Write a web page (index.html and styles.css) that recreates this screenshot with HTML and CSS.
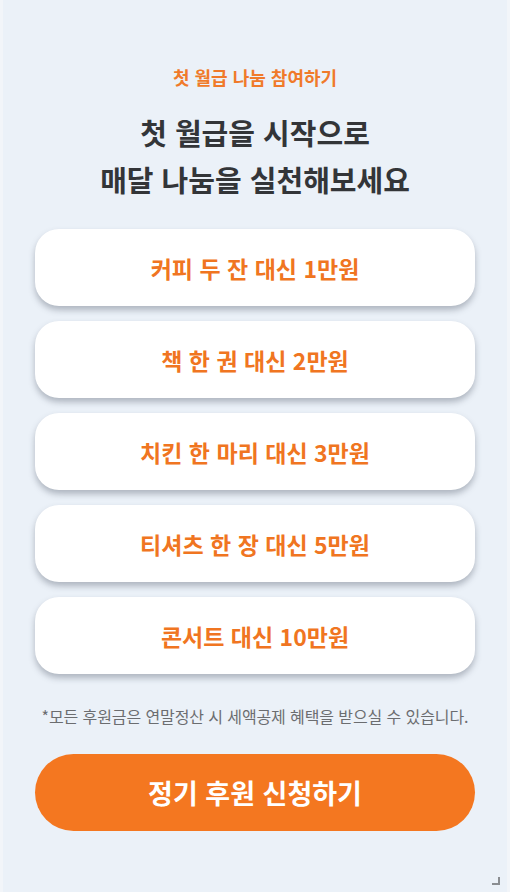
FILE: index.html
```html
<!DOCTYPE html>
<html lang="ko">

<head>
    <meta charset="utf-8">
    <title>첫 월급 나눔 참여하기</title>
    <link rel="stylesheet" href="styles.css">
</head>

<body>
    <main class="page">
        <p class="eyebrow">첫 월급 나눔 참여하기</p>
        <h1 class="headline">첫 월급을 시작으로<br>매달 나눔을 실천해보세요</h1>
        <section class="options">
            <button class="option">커피 두 잔 대신 1만원</button>
            <button class="option">책 한 권 대신 2만원</button>
            <button class="option">치킨 한 마리 대신 3만원</button>
            <button class="option">티셔츠 한 장 대신 5만원</button>
            <button class="option">콘서트 대신 10만원</button>
        </section>
        <p class="note">*모든 후원금은 연말정산 시 세액공제 혜택을 받으실 수 있습니다.</p>
        <button class="cta">정기 후원 신청하기</button>
        <span class="resize"></span>
    </main>
</body>

</html>
```

FILE: styles.css
```css
html,
body {
    margin: 0;
    height: 100%;
}

body {
    font-family: 'Noto Sans CJK KR', 'Noto Sans', sans-serif;
    background: #f2f5f9;
}

.page {
    position: relative;
    box-sizing: border-box;
    height: 100%;
    margin: 0 3px 3px;
    padding: 63px 32px 0;
    background: #ebf1f8;
    display: flex;
    flex-direction: column;
    align-items: center;
}

.eyebrow {
    margin: 0;
    color: #f07a2a;
    font-size: 18px;
    font-weight: 700;
    line-height: 28px;
}

.headline {
    margin: 18px 0 0;
    color: #333538;
    font-size: 29px;
    font-weight: 700;
    line-height: 47px;
    text-align: center;
}

.options {
    width: 100%;
    margin-top: 26px;
    display: flex;
    flex-direction: column;
    gap: 15px;
}

.option {
    height: 77px;
    border: 0;
    border-radius: 24px;
    background: #fff;
    box-shadow: 0 4px 6px rgba(60, 70, 85, 0.35);
    color: #f07521;
    font-family: inherit;
    font-size: 23px;
    font-weight: 700;
}

.note {
    margin: 30px 0 0;
    color: #6b6d70;
    font-size: 16px;
    line-height: 24px;
    letter-spacing: -0.1px;
}

.cta {
    width: 100%;
    height: 77px;
    margin-top: 26px;
    border: 0;
    border-radius: 39px;
    background: #f47720;
    color: #fff;
    font-family: inherit;
    font-size: 27px;
    font-weight: 700;
}

.resize {
    position: absolute;
    right: 7px;
    bottom: 7px;
    width: 6px;
    height: 6px;
    border-right: 2px solid #8a8d91;
    border-bottom: 2px solid #8a8d91;
}
```
